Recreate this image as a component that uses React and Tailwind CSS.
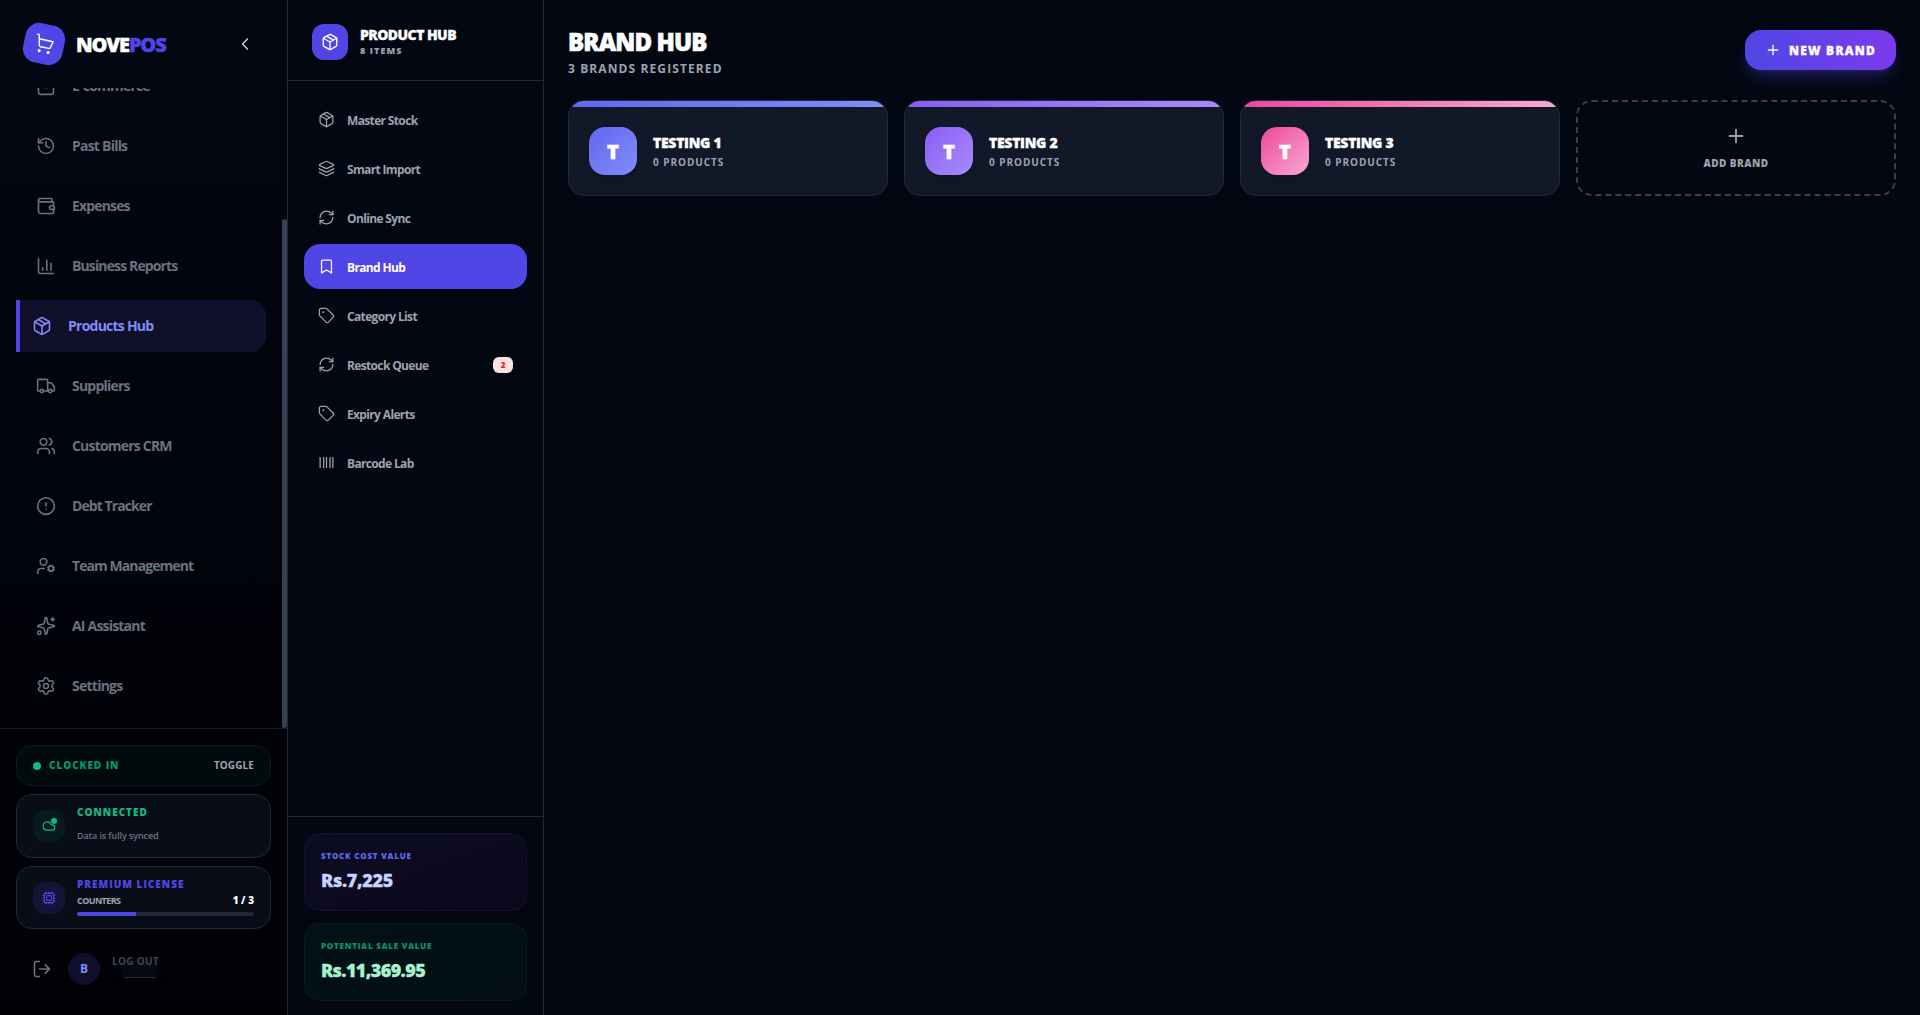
import {
  Barcode,
  Bookmark,
  ChartColumn,
  ChevronLeft,
  CircleAlert,
  Cloud,
  Cpu,
  History,
  Layers,
  LogOut,
  Package,
  Plus,
  RefreshCw,
  Settings,
  ShoppingBag,
  ShoppingCart,
  Sparkles,
  Tag,
  Truck,
  UserCog,
  Users,
  Wallet,
} from 'lucide-react';

const mainNav = [
  { label: 'E-commerce', icon: ShoppingBag, tracking: 'tracking-[-0.8px]' },
  { label: 'Past Bills', icon: History, tracking: 'tracking-[-0.78px]' },
  { label: 'Expenses', icon: Wallet, tracking: 'tracking-[-0.85px]' },
  { label: 'Business Reports', icon: ChartColumn, tracking: 'tracking-[-0.87px]' },
  { label: 'Products Hub', icon: Package, tracking: 'tracking-[-0.76px]', active: true },
  { label: 'Suppliers', icon: Truck, tracking: 'tracking-[-0.78px]' },
  { label: 'Customers CRM', icon: Users, tracking: 'tracking-[-0.8px]' },
  { label: 'Debt Tracker', icon: CircleAlert, tracking: 'tracking-[-0.92px]' },
  { label: 'Team Management', icon: UserCog, tracking: 'tracking-[-0.93px]' },
  { label: 'AI Assistant', icon: Sparkles, tracking: 'tracking-[-0.8px]' },
  { label: 'Settings', icon: Settings, tracking: 'tracking-[-0.75px]' },
];

const hubNav = [
  { label: 'Master Stock', icon: Package },
  { label: 'Smart Import', icon: Layers },
  { label: 'Online Sync', icon: RefreshCw },
  { label: 'Brand Hub', icon: Bookmark, active: true },
  { label: 'Category List', icon: Tag },
  { label: 'Restock Queue', icon: RefreshCw, badge: 2 },
  { label: 'Expiry Alerts', icon: Tag },
  { label: 'Barcode Lab', icon: Barcode },
];

const brands = [
  { name: 'TESTING 1', bar: 'from-[#6366f1] to-[#818cf8]' },
  { name: 'TESTING 2', bar: 'from-[#8b5cf6] to-[#a78bfa]' },
  { name: 'TESTING 3', bar: 'from-[#ec4899] to-[#f9a8d4]' },
];

const Sidebar = () => (
  <aside className="w-72 shrink-0 flex flex-col border-r border-[#1f2937] bg-linear-to-b/srgb from-[#030712] to-[#010105]">
    {/* Logo */}
    <div className="h-22 shrink-0 flex items-center pl-6 pr-8">
      <div className="w-10 h-10 rounded-[14px] rotate-12 bg-[#4f46e5] text-white flex items-center justify-center">
        <ShoppingCart size={20} strokeWidth={1.7} />
      </div>
      <span className="ml-3 mt-0.5 text-xl font-extrabold tracking-[-1.15px] [-webkit-text-stroke:0.4px] text-white">
        NOVE<span className="text-[#4f46e5]">POS</span>
      </span>
      <ChevronLeft size={20} strokeWidth={1.7} className="ml-auto text-[#d1d5db]" />
    </div>

    {/* Navigation, scrolled to the end */}
    <div className="flex-1 min-h-0 flex overflow-hidden">
      <nav className="flex-1 flex flex-col justify-end gap-2 pl-4 pr-4 pb-4">
        {mainNav.map(({ label, icon: Icon, tracking, active }) => (
          <div
            key={label}
            className={
              active
                ? 'h-13 shrink-0 flex items-center gap-4 pl-3 border-l-4 border-[#4f46e5] rounded-r-2xl bg-[#10102b] text-[#818cf8]'
                : 'h-13 shrink-0 flex items-center gap-4 pl-5 text-[#6b7280]'
            }
          >
            <Icon size={20} strokeWidth={1.9} />
            <span className={`text-sm font-bold ${tracking}`}>{label}</span>
          </div>
        ))}
      </nav>
      <div className="w-[5px] mt-[131px] rounded-full bg-[#374151]" />
    </div>

    {/* Status */}
    <div className="shrink-0 h-[287px] border-t border-[#141b29] p-4 flex flex-col gap-2">
      <div className="h-[41px] shrink-0 flex items-center px-4 rounded-2xl border border-[#04201e] bg-[#010a0c]">
        <span className="w-2 h-2 rounded-full bg-[#10b981]" />
        <span className="ml-2 text-[10px] font-extrabold tracking-[0.95px] text-[#059669]">CLOCKED IN</span>
        <span className="ml-auto text-[10px] font-bold tracking-[0.1px] text-[#9ca3af]">TOGGLE</span>
      </div>

      <div className="h-16 shrink-0 flex items-center px-4 rounded-2xl border border-[#1f2937] bg-[#090d18]">
        <div className="relative w-8 h-8 rounded-xl bg-[#071a1f] text-[#10b981] flex items-center justify-center">
          <Cloud size={14} strokeWidth={2} />
          <span className="absolute top-2 right-2 w-1.5 h-1.5 rounded-full bg-[#10b981]" />
        </div>
        <div className="ml-3 mb-1">
          <p className="text-[10px] leading-[15px] font-extrabold tracking-[1px] text-[#10b981]">CONNECTED</p>
          <p className="mt-2 text-[9px] leading-[15px] font-semibold tracking-[-0.1px] text-[#6b7280]">Data is fully synced</p>
        </div>
      </div>

      <div className="h-[63px] shrink-0 flex items-center px-4 rounded-2xl border border-[#1f2937] bg-[#090d18]">
        <div className="w-8 h-8 rounded-xl bg-[#151437] text-[#4f46e5] flex items-center justify-center">
          <Cpu size={14} strokeWidth={2} />
        </div>
        <div className="ml-3 flex-1">
          <p className="-mt-0.5 text-[10px] leading-[15px] font-extrabold tracking-[1px] text-[#4f46e5]">PREMIUM LICENSE</p>
          <div className="mt-px flex justify-between text-[9px] leading-[15px]">
            <span className="font-bold tracking-[-0.6px] text-[#9ca3af]">COUNTERS</span>
            <span className="text-[10px] font-extrabold text-white">1 / 3</span>
          </div>
          <div className="mt-1 h-1 rounded-full bg-[#1f2937] overflow-hidden">
            <div className="h-full w-1/3 bg-[#4f46e5]" />
          </div>
        </div>
      </div>

      <div className="flex-1 flex items-center pl-4 pt-0.5">
        <LogOut size={20} strokeWidth={1.9} className="text-[#6b7280]" />
        <div className="ml-4 w-8 h-8 rounded-full bg-[#100f2b] text-[#818cf8] text-xs font-bold flex items-center justify-center">B</div>
        <div className="ml-3 h-8">
          <p className="text-[10px] leading-4 font-bold tracking-[0.3px] text-[#40464f]">LOG OUT</p>
          <div className="ml-3 -mt-[3px] w-8 h-3 border-b border-[#1f2937] bg-[#060a14] shadow-[0_-3px_5px_3px_#060a14]" />
        </div>
      </div>
    </div>
  </aside>
);

const HubPanel = () => (
  <aside className="w-64 shrink-0 flex flex-col border-r border-[#1f2937]">
    <div className="h-[81px] shrink-0 flex items-center gap-3 px-6 pt-1 border-b border-[#1f2937]">
      <div className="w-9 h-9 rounded-xl bg-[#4f46e5] text-white flex items-center justify-center">
        <Package size={18} strokeWidth={1.8} />
      </div>
      <div>
        <h2 className="text-sm leading-[18px] font-extrabold tracking-[-0.55px] [-webkit-text-stroke:0.3px] text-white">PRODUCT HUB</h2>
        <p className="text-[9px] leading-[14px] font-extrabold tracking-[1.1px] text-[#9ca3af]">8 ITEMS</p>
      </div>
    </div>

    <nav className="flex-1 flex flex-col gap-1 p-4">
      {hubNav.map(({ label, icon: Icon, active, badge }) => (
        <div
          key={label}
          className={`h-[45px] shrink-0 flex items-center px-3.5 rounded-2xl ${
            active ? 'bg-[#4f46e5] text-white' : 'text-[#9ca3af]'
          }`}
        >
          <Icon size={17} strokeWidth={1.8} />
          <span className="ml-3 mt-0.5 text-xs font-bold tracking-[-0.65px]">{label}</span>
          {badge && (
            <span className="ml-auto w-5 h-4 rounded-md bg-[#fee2e2] text-[#dc2626] text-[8px] font-extrabold flex items-center justify-center">
              {badge}
            </span>
          )}
        </div>
      ))}
    </nav>

    {/* Totals */}
    <div className="shrink-0 border-t border-[#1f2937] px-4 pt-4 pb-[14px] flex flex-col gap-3">
      <div className="h-[78px] px-4 pt-[14px] rounded-2xl border border-[#12122f] bg-linear-to-br/srgb from-[#0b0d20] to-[#0d071e]">
        <p className="text-[8px] leading-4 font-extrabold tracking-[0.8px] text-[#6366f1]">STOCK COST VALUE</p>
        <p className="text-lg leading-8 font-extrabold tracking-[-0.3px] [-webkit-text-stroke:0.3px] text-[#c7d2fe]">Rs.7,225</p>
      </div>
      <div className="h-[78px] px-4 pt-[14px] rounded-2xl border border-[#041d20] bg-linear-to-br/srgb from-[#031218] to-[#020e14]">
        <p className="text-[8px] leading-4 font-extrabold tracking-[0.8px] text-[#059669]">POTENTIAL SALE VALUE</p>
        <p className="text-lg leading-8 font-extrabold tracking-[-0.6px] [-webkit-text-stroke:0.3px] text-[#a7f3d0]">Rs.11,369.95</p>
      </div>
    </div>
  </aside>
);

const BrandCard = ({ name, bar }) => (
  <div className="h-24 flex flex-col rounded-2xl border border-[#1f2937] bg-[#111827] overflow-hidden">
    <div className={`h-1.5 shrink-0 bg-linear-to-r/srgb ${bar}`} />
    <div className="flex-1 flex items-center gap-4 px-5">
      <div className={`w-12 h-12 rounded-2xl bg-linear-to-br/srgb shadow-md ${bar} text-white text-xl font-extrabold [-webkit-text-stroke:0.6px] flex items-center justify-center pt-0.5`}>
        T
      </div>
      <div>
        <h3 className="mt-0.5 text-sm leading-5 font-extrabold tracking-[-0.3px] [-webkit-text-stroke:0.3px] text-white">{name}</h3>
        <p className="text-[10px] leading-[18px] font-bold tracking-[0.95px] text-[#9ca3af]">0 PRODUCTS</p>
      </div>
    </div>
  </div>
);

const App = () => {
  return (
    <div className="h-screen flex overflow-hidden bg-[#030712] font-['Open_Sans',sans-serif]">
      <Sidebar />
      <HubPanel />
      <main className="flex-1 p-6">
        <div className="h-[76px] flex justify-between">
          <div>
            <h1 className="text-2xl leading-9 font-extrabold tracking-[-0.87px] [-webkit-text-stroke:0.6px] text-white">BRAND HUB</h1>
            <p className="mt-px text-xs leading-4 font-bold tracking-[1.1px] text-[#9ca3af]">3 BRANDS REGISTERED</p>
          </div>
          <button className="mt-1.5 h-10 w-[151px] flex items-center justify-center gap-2 rounded-2xl bg-linear-to-r/srgb from-[#4f46e5] to-[#7c3aed] text-white shadow-lg shadow-[#4f46e5]/30">
            <Plus size={16} strokeWidth={2} />
            <span className="pt-0.5 text-xs font-extrabold tracking-[1.25px] [-webkit-text-stroke:0.3px]">NEW BRAND</span>
          </button>
        </div>
        <div className="grid grid-cols-4 gap-4">
          {brands.map((brand) => (
            <BrandCard key={brand.name} {...brand} />
          ))}
          <button className="h-24 flex flex-col items-center justify-center gap-2 rounded-2xl border-2 border-dashed border-[#374151] text-[#9ca3af]">
            <Plus size={22} strokeWidth={2} />
            <span className="text-[10px] leading-4 font-extrabold tracking-[0.45px]">ADD BRAND</span>
          </button>
        </div>
      </main>
    </div>
  );
};

export default App;
